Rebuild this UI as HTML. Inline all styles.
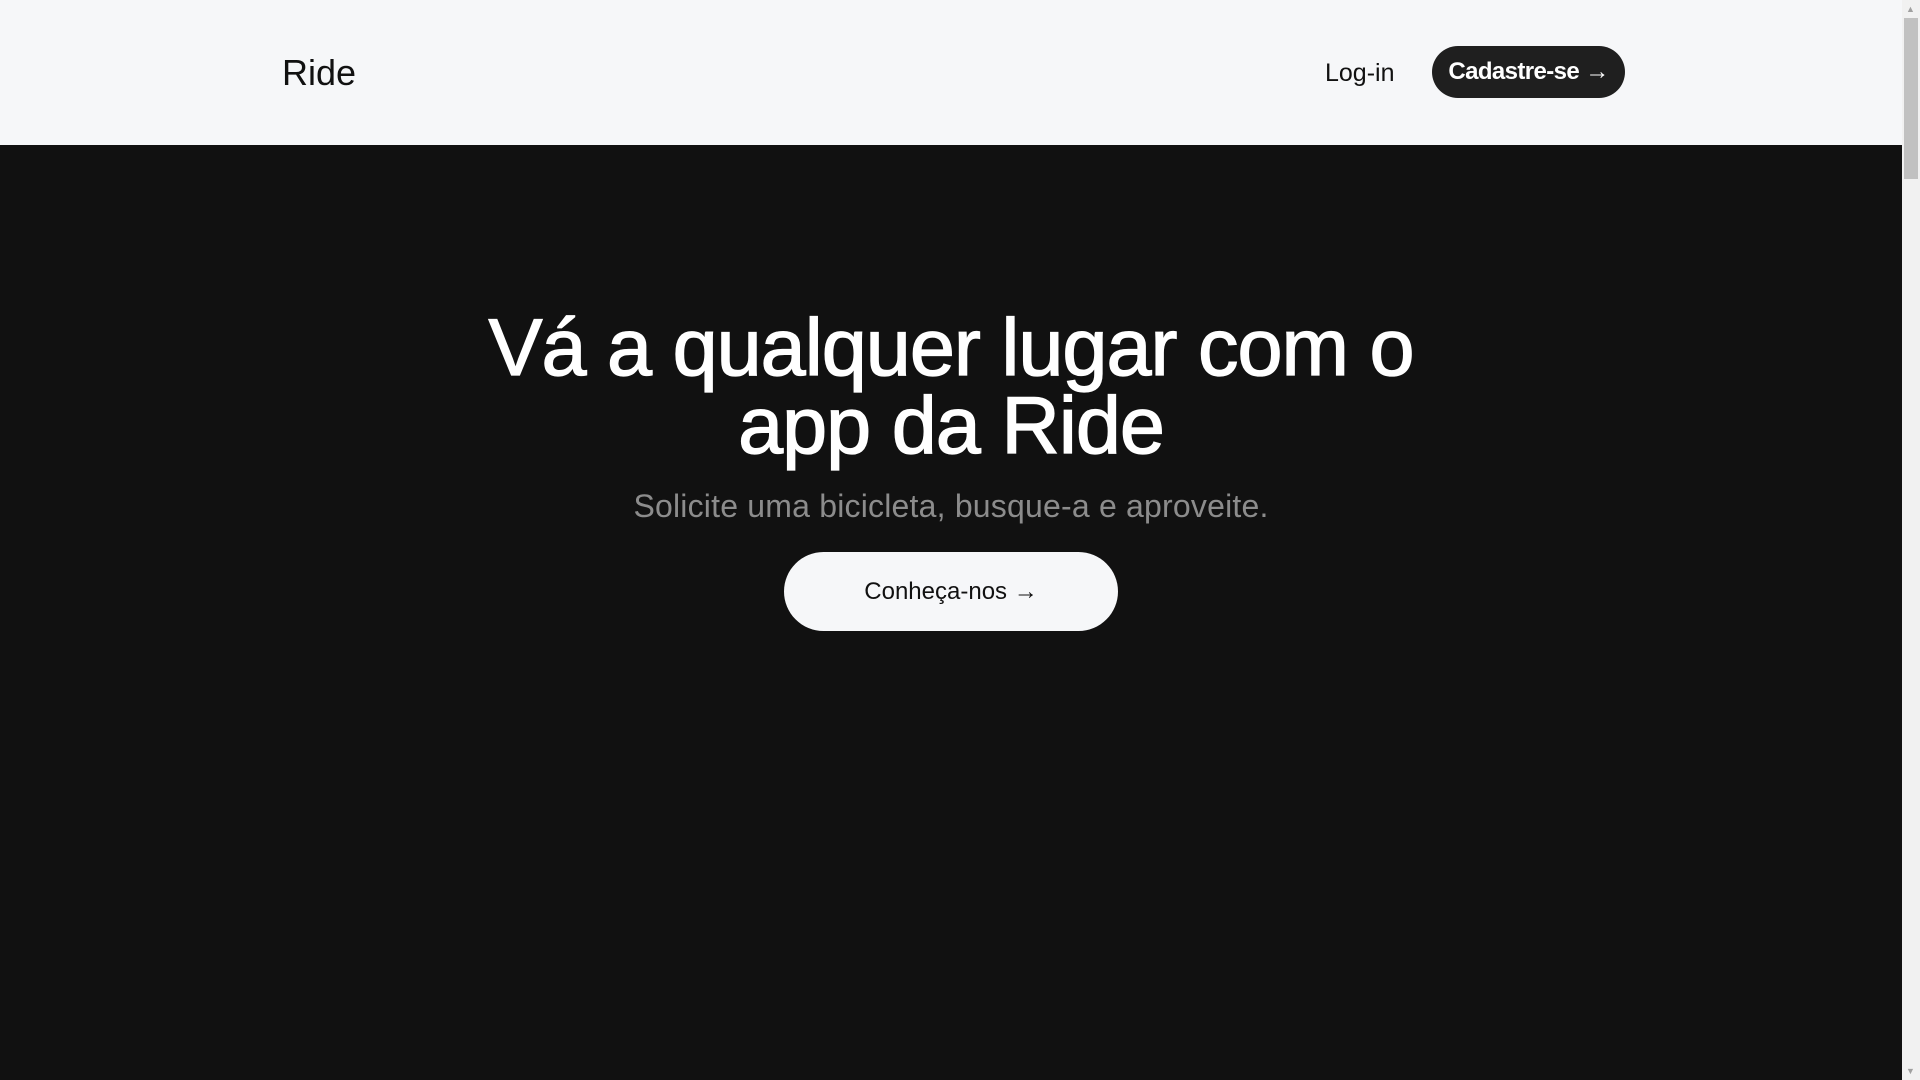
<!DOCTYPE html>
<html><head><meta charset="utf-8"><style>
*{margin:0;padding:0;box-sizing:border-box}
html,body{width:1920px;height:1080px;overflow:hidden;background:#111;font-family:"Liberation Sans",sans-serif}
.hdr{position:absolute;left:0;top:0;width:1902px;height:145px;background:#f6f7f9}
.logo{position:absolute;left:282px;top:51px;font-size:36px;color:#111;line-height:44px}
.login{position:absolute;left:1325px;top:58px;font-size:25px;color:#111;line-height:30px}
.cad{position:absolute;left:1432px;top:46px;width:193px;height:52px;border-radius:26px;background:#1f1f1f;color:#fff;font-size:24px;font-weight:bold;line-height:52px;text-align:center;letter-spacing:-0.6px}
.hero{position:absolute;left:0;top:145px;width:1902px;height:935px;background:#111}
h1{position:absolute;left:0;width:1902px;top:309px;text-align:center;color:#fff;font-size:81px;font-weight:normal;line-height:78px;-webkit-text-stroke:1.3px #fff;letter-spacing:-1px}
.sub{position:absolute;left:0;width:1902px;top:487px;text-align:center;color:#8c8c8c;font-size:32px;line-height:38px;letter-spacing:0.2px}
.btn{position:absolute;left:784px;top:552px;width:334px;height:79px;border-radius:40px;background:#f6f7f9;color:#111;font-size:24px;line-height:79px;text-align:center}
.sb{position:absolute;left:1902px;top:0;width:18px;height:1080px;background:#f1f1f1}
.th{position:absolute;left:1904px;top:18px;width:14px;height:161px;background:#c1c1c1}
</style></head><body>
<div class="hdr">
<div class="logo">Ride</div>
<div class="login">Log-in</div>
<div class="cad">Cadastre-se →</div>
</div>
<div class="hero"></div>
<h1>Vá a qualquer lugar com o<br>app da Ride</h1>
<div class="sub">Solicite uma bicicleta, busque-a e aproveite.</div>
<div class="btn">Conheça-nos →</div>
<div class="sb"></div><div class="th"></div>
<div style="position:absolute;left:1906px;top:4px;color:#a0a0a0;font-size:9px">▲</div>
<div style="position:absolute;left:1906px;top:1066px;color:#a0a0a0;font-size:9px">▼</div>
</body></html>
